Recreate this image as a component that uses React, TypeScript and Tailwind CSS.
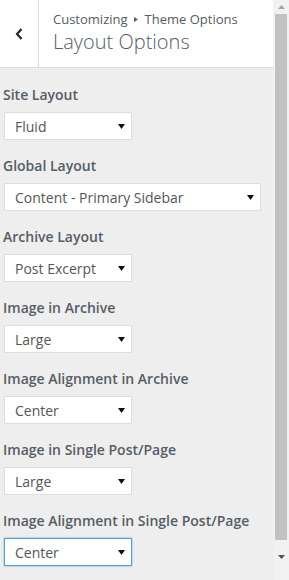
import React from 'react'

const controls = [
    { label: 'Site Layout', value: 'Fluid', wide: false },
    { label: 'Global Layout', value: 'Content - Primary Sidebar', wide: true },
    { label: 'Archive Layout', value: 'Post Excerpt', wide: false },
    { label: 'Image in Archive', value: 'Large', wide: false },
    { label: 'Image Alignment in Archive', value: 'Center', wide: false },
    { label: 'Image in Single Post/Page', value: 'Large', wide: false },
    { label: 'Image Alignment in Single Post/Page', value: 'Center', wide: false, focused: true },
]

const Caret = () => (
    <svg width="7" height="5" viewBox="0 0 7 5" className="shrink-0">
        <path d="M0 0 L7 0 L3.5 5 Z" fill="#111" />
    </svg>
)

const App = () => {
    return (
        <div className="w-[289px] h-[580px] flex bg-[#eeeeee] overflow-hidden font-['Open_Sans',sans-serif]">
            <div className="w-[273px] flex flex-col">
                <div className="h-[68px] flex bg-white border-b border-[#dddddd] shrink-0">
                    <div className="w-[39px] border-r border-[#dddddd] flex items-center justify-center">
                        <svg width="8" height="12" viewBox="0 0 8 12">
                            <path d="M6.5 1 L2 6 L6.5 11" stroke="#23282d" strokeWidth="2.2" fill="none" />
                        </svg>
                    </div>
                    <div className="pl-[14px] pt-[9px] text-[#555d66]">
                        <div className="text-[13px] leading-[20px] flex items-center">
                            <span>Customizing</span>
                            <svg width="4" height="5" viewBox="0 0 4 5" className="ml-[6px] mr-[7px]">
                                <path d="M0 0 L4 2.5 L0 5 Z" fill="#555d66" />
                            </svg>
                            <span>Theme Options</span>
                        </div>
                        <div className="text-[20px] font-light leading-[26px]">Layout Options</div>
                    </div>
                </div>
                <div className="pl-[4px] pt-[16px] flex flex-col gap-[15px]">
                    {controls.map((c) => (
                        <div key={c.label} className="flex flex-col gap-[7px]">
                            <div className="pt-[1px] text-[14px] font-semibold leading-[20px] text-[#555d66] -ml-[1px]">
                                {c.label}
                            </div>
                            <div
                                className={
                                    (c.wide ? 'w-[257px] ' : 'w-[128px] ') +
                                    (c.focused
                                        ? 'border-[#5b9dd9] shadow-[0_0_2px_rgba(30,140,190,0.6)] '
                                        : 'border-[#dddddd] ') +
                                    'h-[28px] bg-white border flex items-center justify-between pl-[10px] pr-[6px] text-[14px] text-[#555555]'
                                }
                            >
                                <span>{c.value}</span>
                                <Caret />
                            </div>
                        </div>
                    ))}
                </div>
            </div>
            <div className="w-[16px] h-full bg-[#f1f1f1] flex flex-col items-center">
                <div className="h-[14px] flex items-center justify-center">
                    <svg width="7" height="4" viewBox="0 0 7 4">
                        <path d="M0 4 L7 4 L3.5 0 Z" fill="#a3a3a3" />
                    </svg>
                </div>
                <div className="w-[12px] h-[526px] bg-[#c1c1c1]" />
                <div className="h-[34px] flex items-center justify-center">
                    <svg width="7" height="4" viewBox="0 0 7 4">
                        <path d="M0 0 L7 0 L3.5 4 Z" fill="#505050" />
                    </svg>
                </div>
            </div>
        </div>
    )
}

export default App
